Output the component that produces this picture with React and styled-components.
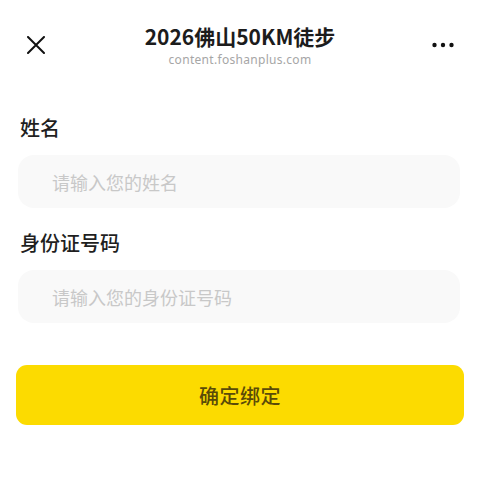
import styled, { createGlobalStyle } from "styled-components";

const GlobalStyle = createGlobalStyle`
  body {
    margin: 0;
    background: #ffffff;
    font-family: "Noto Sans CJK SC", "Noto Sans", sans-serif;
  }
`;

const Page = styled.div`
  width: 480px;
  min-height: 480px;
  background: #ffffff;
`;

const Header = styled.header`
  display: grid;
  grid-template-columns: 72px 1fr 72px;
  align-items: center;
  height: 90px;
`;

const IconButton = styled.button`
  display: flex;
  align-items: center;
  justify-content: ${(props) => (props.right ? "flex-end" : "flex-start")};
  padding: ${(props) => (props.right ? "0 26px 0 0" : "0 0 0 27px")};
  border: none;
  background: none;
  color: #111;
  height: 40px;
`;

const TitleBlock = styled.div`
  display: flex;
  flex-direction: column;
  align-items: center;
`;

const Title = styled.div`
  font-size: 21px;
  line-height: 24px;
  font-weight: 700;
  color: #1c1c1c;
`;

const Subtitle = styled.div`
  font-family: "Noto Sans", sans-serif;
  font-size: 12px;
  line-height: 14px;
  margin-top: 5px;
  color: #a6a6a6;
  letter-spacing: 0.3px;
`;

const Form = styled.div`
  display: flex;
  flex-direction: column;
  padding: 0 20px 0 18px;
`;

const Field = styled.div`
  display: flex;
  flex-direction: column;
  margin-top: ${(props) => props.top}px;
`;

const Label = styled.label`
  font-size: 20px;
  line-height: 28px;
  font-weight: 500;
  color: #1f1f1f;
  padding-left: 2px;
  margin-bottom: 13px;
`;

const Input = styled.input`
  box-sizing: border-box;
  height: 53px;
  width: 100%;
  border: none;
  outline: none;
  border-radius: 16px;
  background: #f9f9f9;
  padding: 0 0 0 34px;
  font-family: "Noto Sans CJK SC", "Noto Sans", sans-serif;
  font-size: 18px;
  color: #333;

  &::placeholder {
    color: #c8c8c8;
  }
`;

const SubmitButton = styled.button`
  margin: 42px -4px 0 -2px;
  height: 60px;
  border: none;
  border-radius: 11px;
  background: #fcdb00;
  color: #5a4b08;
  font-family: "Noto Sans CJK SC", "Noto Sans", sans-serif;
  font-size: 20px;
  font-weight: 500;
  letter-spacing: 0.5px;
`;

function CloseIcon() {
  return (
    <svg width="18" height="18" viewBox="0 0 18 18">
      <path d="M1 1 L17 17 M17 1 L1 17" stroke="#111" strokeWidth="2" strokeLinecap="round" />
    </svg>
  );
}

function MoreIcon() {
  return (
    <svg width="22" height="6" viewBox="0 0 22 6">
      <circle cx="2.5" cy="3" r="2.2" fill="#111" />
      <circle cx="11" cy="3" r="2.2" fill="#111" />
      <circle cx="19.5" cy="3" r="2.2" fill="#111" />
    </svg>
  );
}

export default function App() {
  return (
    <Page>
      <GlobalStyle />
      <Header>
        <IconButton>
          <CloseIcon />
        </IconButton>
        <TitleBlock>
          <Title>2026佛山50KM徒步</Title>
          <Subtitle>content.foshanplus.com</Subtitle>
        </TitleBlock>
        <IconButton right>
          <MoreIcon />
        </IconButton>
      </Header>
      <Form>
        <Field top={24}>
          <Label htmlFor="name">姓名</Label>
          <Input id="name" type="text" placeholder="请输入您的姓名" />
        </Field>
        <Field top={21}>
          <Label htmlFor="idcard">身份证号码</Label>
          <Input id="idcard" type="text" placeholder="请输入您的身份证号码" />
        </Field>
        <SubmitButton>确定绑定</SubmitButton>
      </Form>
    </Page>
  );
}
